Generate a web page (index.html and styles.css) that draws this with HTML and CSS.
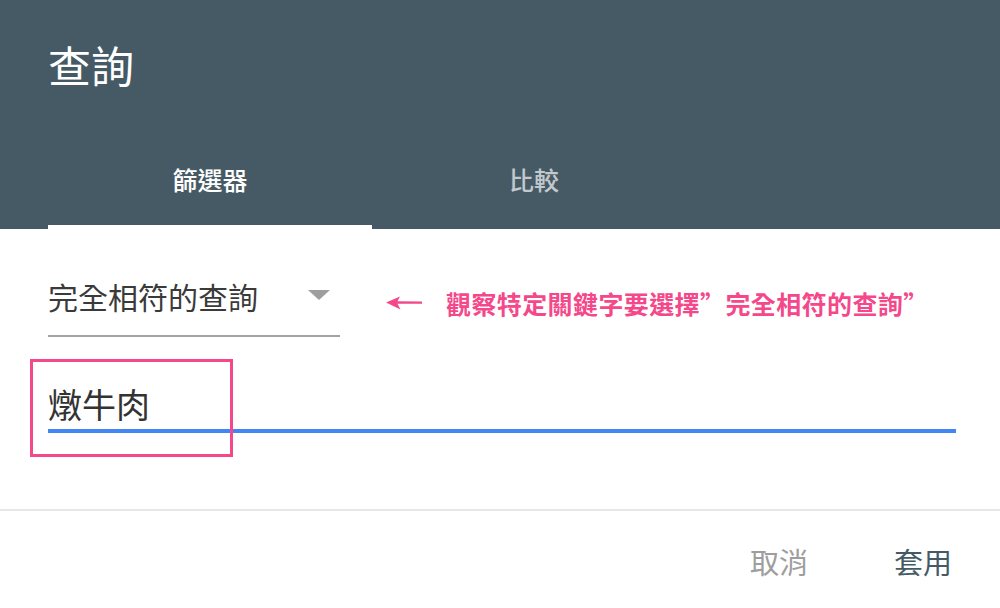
FILE: index.html
```html
<!DOCTYPE html>
<html lang="zh-Hant">
<head>
<meta charset="utf-8">
<title>查詢</title>
<link rel="stylesheet" href="styles.css">
</head>
<body>
<div class="dialog">
  <header class="header">
    <h1 class="title">查詢</h1>
    <nav class="tabs">
      <div class="tab tab-active">篩選器</div>
      <div class="tab">比較</div>
    </nav>
  </header>
  <main class="content">
    <div class="select-row">
      <div class="select">
        <span class="select-text">完全相符的查詢</span>
        <span class="caret"></span>
      </div>
      <div class="note">
        <svg class="note-arrow" width="38" height="16" viewBox="0 0 38 16">
          <path d="M1 7.5 L15 1.5 L12.5 6.3 L37 6.6 L37 8.8 L12.5 8.8 L15.5 14.5 Z" fill="#f4488b"/>
        </svg>
        <span class="note-text">觀察特定關鍵字要選擇”完全相符的查詢”</span>
      </div>
    </div>
    <div class="field">
      <span class="field-text">燉牛肉</span>
      <div class="highlight"></div>
    </div>
  </main>
  <footer class="footer">
    <button class="btn btn-cancel">取消</button>
    <button class="btn btn-apply">套用</button>
  </footer>
</div>
</body>
</html>
```
FILE: styles.css
```css
html, body {
  margin: 0;
  padding: 0;
  background: #ffffff;
}
body {
  width: 1000px;
  height: 608px;
  overflow: hidden;
  font-family: "Noto Sans CJK TC", "Noto Sans", sans-serif;
}
.dialog {
  display: flex;
  flex-direction: column;
  width: 1000px;
}
.header {
  height: 229px;
  background: #465a65;
  display: flex;
  flex-direction: column;
  padding-left: 48px;
  box-sizing: border-box;
}
.title {
  margin: 43px 0 0 0;
  font-size: 43px;
  line-height: 43px;
  font-weight: 400;
  color: #ffffff;
}
.tabs {
  margin-top: auto;
  display: flex;
  height: 96px;
}
.tab {
  width: 324px;
  display: flex;
  align-items: center;
  justify-content: center;
  font-size: 25px;
  font-weight: 500;
  color: #c2c9cd;
  box-sizing: border-box;
  border-bottom: 4px solid transparent;
}
.tab-active {
  color: #ffffff;
  border-bottom-color: #ffffff;
}
.content {
  padding: 0 44px 0 48px;
  display: flex;
  flex-direction: column;
}
.select-row {
  display: flex;
  align-items: center;
  margin-top: 52px;
}
.select {
  width: 292px;
  display: flex;
  align-items: center;
  justify-content: space-between;
  padding: 0 10px 24px 0;
  box-sizing: border-box;
  border-bottom: 2px solid #a3a3a3;
}
.select-text {
  font-size: 30px;
  line-height: 30px;
  color: #3a3a3a;
}
.caret {
  width: 0;
  height: 0;
  border-left: 11px solid transparent;
  border-right: 11px solid transparent;
  border-top: 10px solid #9e9e9e;
  margin-top: -2px;
}
.note {
  display: flex;
  align-items: center;
  margin-left: 45px;
  margin-bottom: 12px;
}
.note-arrow {
  display: block;
}
.note-text {
  margin-left: 23px;
  font-size: 25px;
  letter-spacing: 0.4px;
  line-height: 30px;
  font-weight: 700;
  color: #f4488b;
}
.field {
  position: relative;
  margin-top: 50px;
  padding-bottom: 8px;
  border-bottom: 4px solid #4285f4;
}
.field-text {
  display: block;
  font-size: 34px;
  line-height: 34px;
  color: #333333;
}
.highlight {
  position: absolute;
  left: -18px;
  top: -28px;
  width: 203px;
  height: 98px;
  box-sizing: border-box;
  border: 3px solid #f4488b;
}
.footer {
  margin-top: 76px;
  border-top: 2px solid #e6e6e6;
  display: flex;
  justify-content: flex-end;
  gap: 86px;
  padding: 36px 48px 0 0;
}
.btn {
  background: none;
  border: none;
  padding: 0;
  margin: 0;
  font-family: inherit;
  font-size: 29px;
  line-height: 29px;
  cursor: pointer;
}
.btn-cancel {
  color: #9e9e9e;
}
.btn-apply {
  color: #465a65;
}
```
